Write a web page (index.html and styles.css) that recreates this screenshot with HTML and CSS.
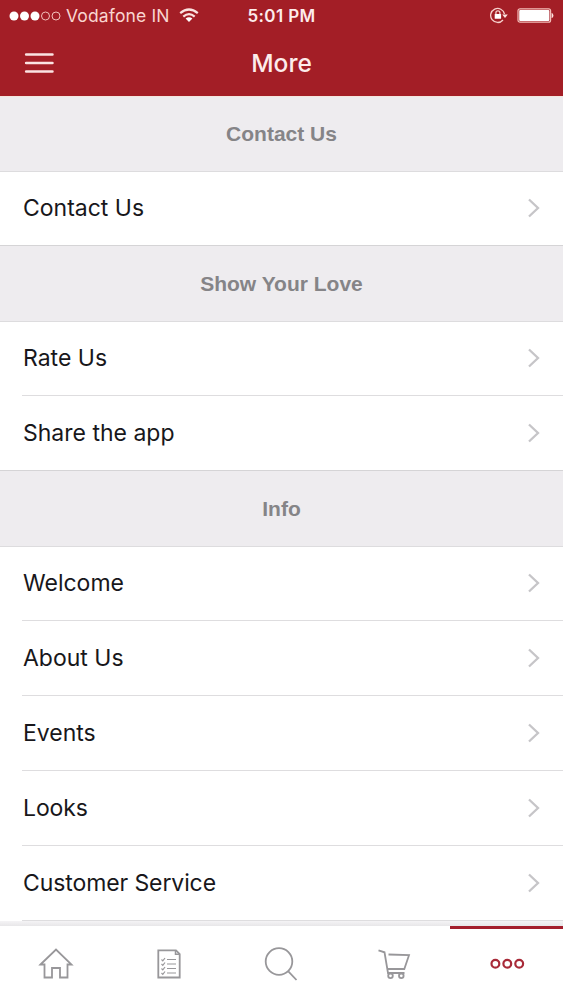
FILE: index.html
```html
<!DOCTYPE html>
<html lang="en">
<head>
<meta charset="utf-8">
<title>More</title>
<link rel="stylesheet" href="styles.css">
</head>
<body>
<div class="screen">
  <header class="top">
    <div class="status">
      <div class="status-left">
        <svg class="signal" width="52" height="12" viewBox="0 0 52 12"><g fill="#fff"><circle cx="5" cy="6" r="4.5"/><circle cx="15.500" cy="6" r="4.5"/><circle cx="26" cy="6" r="4.5"/></g><g fill="none" stroke="#f3c1bb" stroke-width="1"><circle cx="36.500" cy="6" r="4"/><circle cx="47" cy="6" r="4"/></g></svg>
        <span class="carrier">Vodafone IN</span>
        <svg class="wifi" width="20" height="16" viewBox="0 0 20 16"><g fill="none" stroke="#fbe3e0" stroke-width="2.200"><path d="M1.200 5.200Q10-2.200 18.800 5.200"/><path d="M4.300 8.600Q10 3.600 15.700 8.600"/></g><path fill="#fff" d="M6.600 10.600Q10 8 13.400 10.600L10 14z"/></svg>
      </div>
      <span class="clock">5:01 PM</span>
      <div class="status-right">
        <svg width="20" height="18" viewBox="0 0 20 18"><g fill="none" stroke="#f6d0cc" stroke-width="1.300"><path d="M15.500 7A7 7 0 1 0 14 13"/><path d="M6.900 7.300V5.800a2 2 0 0 1 4 0V7.300"/></g><rect x="5.700" y="7" width="6.400" height="4.800" rx=".6" fill="#fff"/><path d="M13.200 7.500h5.600l-2.800 3.500z" fill="#fbe3e0"/></svg>
        <svg width="38" height="16" viewBox="0 0 38 16"><rect x="2" y=".8" width="32.600" height="13.400" rx="2" fill="none" stroke="#f3bdb8" stroke-width="1.200"/><rect x="3.200" y="2" width="30.200" height="11" rx="1" fill="#fff"/><path d="M35.600 5h.5q1.300 1 1.300 2.500T36.100 10h-.5z" fill="#fbe3e0"/></svg>
      </div>
    </div>
    <div class="nav">
      <svg class="menu" width="30" height="22" viewBox="0 0 30 22"><path d="M2.200 2.500h26.200M2.200 11h26.200M2.200 19.500h26.200" stroke="#fbe3e2" stroke-width="2.700" stroke-linecap="round"/></svg>
      <h1 class="title">More</h1>
    </div>
  </header>
  <main class="list">
    <h2 class="section first">Contact Us</h2>
    <div class="row"><span>Contact Us</span><svg class="chev" viewBox="0 0 14 20"><path d="M2 1.500L11 10L2 18.500"/></svg></div>
    <h2 class="section">Show Your Love</h2>
    <div class="row"><span>Rate Us</span><svg class="chev" viewBox="0 0 14 20"><path d="M2 1.500L11 10L2 18.500"/></svg></div>
    <div class="row"><span>Share the app</span><svg class="chev" viewBox="0 0 14 20"><path d="M2 1.500L11 10L2 18.500"/></svg></div>
    <h2 class="section">Info</h2>
    <div class="row"><span>Welcome</span><svg class="chev" viewBox="0 0 14 20"><path d="M2 1.500L11 10L2 18.500"/></svg></div>
    <div class="row"><span>About Us</span><svg class="chev" viewBox="0 0 14 20"><path d="M2 1.500L11 10L2 18.500"/></svg></div>
    <div class="row"><span>Events</span><svg class="chev" viewBox="0 0 14 20"><path d="M2 1.500L11 10L2 18.500"/></svg></div>
    <div class="row tight"><span>Looks</span><svg class="chev" viewBox="0 0 14 20"><path d="M2 1.500L11 10L2 18.500"/></svg></div>
    <div class="row tight"><span>Customer Service</span><svg class="chev" viewBox="0 0 14 20"><path d="M2 1.500L11 10L2 18.500"/></svg></div>
    <div class="row"></div>
  </main>
  <nav class="tabs">
    <div class="tab"><svg width="36" height="36" viewBox="0 0 36 36"><path d="M2.500 18.500L18 3.500L33.500 18.500H29.500V31.500H22V22H14V31.500H6.500V18.500z"/></svg></div>
    <div class="tab"><svg width="36" height="36" viewBox="0 0 36 36"><path d="M7.300 4.300H25L28.700 8V31.500H7.300z"/><path d="M24.500 4.500V8.300H28.500" stroke-width="1.500"/><path d="M16 13.500h9M16 18h9M16 22.500h9M16 27h9M10.500 13.500l1.300 1.300 2.200-2.800M10.500 18l1.300 1.300 2.200-2.800M10.500 22.500l1.300 1.300 2.200-2.800M10.500 27l1.300 1.300 2.200-2.800" stroke-width="1.200"/></svg></div>
    <div class="tab"><svg width="36" height="36" viewBox="0 0 36 36"><circle cx="16" cy="15.500" r="13.300"/><path d="M25.300 25.300L33.500 34"/></svg></div>
    <div class="tab"><svg width="36" height="36" viewBox="0 0 36 36"><path d="M2.500 4.300L8.500 6.300L12 27H28.500M12.500 8.500L33 9.200L28.300 23H11.500"/><circle cx="14.500" cy="29.800" r="2.300"/><circle cx="25.300" cy="29.800" r="2.300"/></svg></div>
    <div class="tab active"><svg width="36" height="36" viewBox="0 0 36 36"><g stroke-width="2.200"><circle cx="6.400" cy="17.700" r="3.900"/><circle cx="18.300" cy="17.700" r="3.900"/><circle cx="30.200" cy="17.700" r="3.900"/></g></svg></div>
  </nav>
</div>
</body>
</html>
```
FILE: styles.css
```css
* { box-sizing: border-box; }
body { margin: 0; background: #fff; font-family: Inter, "Liberation Sans", sans-serif; }
svg { display: block; flex: none; }
.screen { display: flex; flex-direction: column; width: 563px; height: 1000px; overflow: hidden; }
.top { flex: none; height: 96px; background: #a31e26; color: #fdeceb; }
.status { display: grid; grid-template-columns: 1fr auto 1fr; align-items: center; height: 32px; padding: 0 9px; font-size: 17.5px; line-height: 32px; }
.status-left { display: flex; align-items: center; }
.carrier { margin: 0 9px 0 5px; color: #f9d5d0; letter-spacing: 0.15px; }
.clock { font-weight: 600; font-size: 17px; letter-spacing: 0.4px; }
.status-right { display: flex; align-items: center; justify-content: flex-end; gap: 7px; }
.nav { display: grid; grid-template-columns: 1fr auto 1fr; align-items: center; height: 64px; padding: 0 24px 2px; }
.title { margin: 0; font-size: 24.5px; font-weight: 500; line-height: 30px; }
.list { flex: none; height: 825px; overflow: hidden; }
.section { display: flex; align-items: center; justify-content: center; height: 77px; margin: 0; border-top: 1px solid #d5d4d6; border-bottom: 1px solid #dddcde; background: #eeecef; color: #858487; font: bold 21px/26px "Liberation Sans", sans-serif; }
.first { height: 76px; padding-bottom: 1px; border-top-color: #f5e6de; }
.row { display: flex; align-items: center; justify-content: space-between; height: 75px; margin-left: 22px; padding: 0 22px 0 1px; color: #18171b; font-size: 23px; line-height: 30px; }
.section + .row { height: 73px; padding-bottom: 2px; }
.row + .row { border-top: 1px solid #dedddf; }
.tight span { letter-spacing: -0.1px; }
.chev { width: 14px; height: 20px; fill: none; stroke: #c6c5c8; stroke-width: 2.3; }
.tabs { display: grid; grid-template-columns: repeat(5, 1fr); flex: none; height: 79px; padding-top: 5px; background: linear-gradient(#f4f3f5 0, #e8e7e9 5px, #fff 5px); }
.tab { display: flex; align-items: center; justify-content: center; padding-bottom: 2px; border-top: 3px solid transparent; fill: none; stroke: #98979a; stroke-width: 1.8; }
.active { border-top-color: #a31e2c; stroke: #a82a38; }
```
